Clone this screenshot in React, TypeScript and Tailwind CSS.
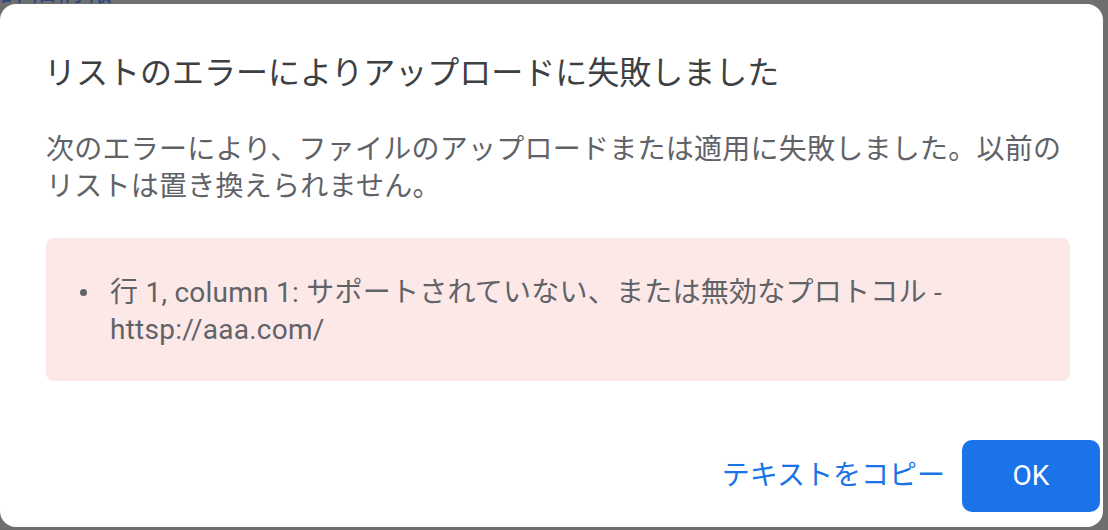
import React from "react";

const font = { fontFamily: 'Roboto, "Noto Sans CJK JP", sans-serif' };

const ErrorDialog = () => {
  return (
    <div className="absolute left-0 top-[4px] flex h-[523px] w-[1103px] flex-col rounded-[16px] bg-white">
      <h2 className="pl-[44px] pt-[49px] text-[32px] leading-[40px] text-[#3c4043]">
        リストのエラーによりアップロードに失敗しました
      </h2>
      <p className="mt-[38px] pl-[46px] pr-[30px] text-[28px] leading-[37px] tracking-[0.25px] text-[#5f6368]">
        次のエラーにより、ファイルのアップロードまたは適用に失敗しました。以前のリストは置き換えられません。
      </p>
      <div className="ml-[46px] mt-[33px] w-[1024px] rounded-[8px] bg-[#fce8e6] pb-[33px] pt-[36px]">
        <ul>
          <li className="flex text-[28px] leading-[37px] tracking-[0.25px] text-[#5f6368]">
            <span className="flex w-[64px] shrink-0 items-start pl-[34px] pt-[15px]">
              <span className="block h-[7px] w-[7px] rounded-full bg-[#5f6368]" />
            </span>
            <span className="pr-[20px]">
              行 1, column 1: サポートされていない、または無効なプロトコル - httsp://aaa.com/
            </span>
          </li>
        </ul>
      </div>
      <div className="mt-auto flex items-center justify-end gap-[17px] pb-[15px] pr-[3px]">
        <button className="text-[28px] leading-[36px] text-[#1a73e8]">テキストをコピー</button>
        <button className="flex h-[72px] w-[138px] items-center justify-center rounded-[10px] bg-[#1a73e8] text-[28px] font-normal text-white">
          OK
        </button>
      </div>
    </div>
  );
};

export default function App() {
  return (
    <div className="relative h-[530px] w-[1108px] overflow-hidden bg-[#6f6f6f]" style={font}>
      <div className="absolute left-0 top-[-26px] text-[28px] leading-[36px] text-[#2d4687]">詳細情報</div>
      <ErrorDialog />
    </div>
  );
}
